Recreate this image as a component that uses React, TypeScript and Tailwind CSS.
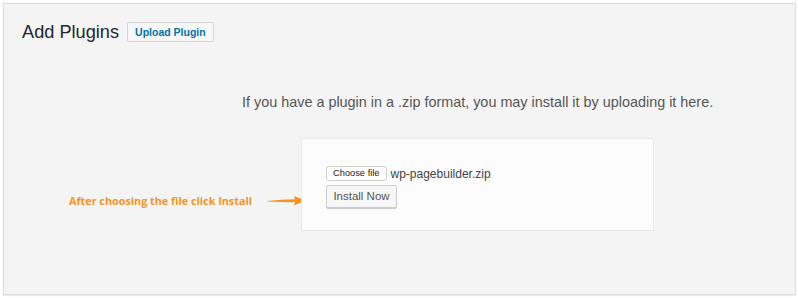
import React from "react";

export default function App() {
  return (
    <div className="w-[798px] h-[298px] bg-white p-[3px] pb-[3px]" style={{ fontFamily: '"Liberation Sans", Arial, sans-serif' }}>
      <div className="h-[292px] w-[793px] bg-[#f4f4f4] border border-[#dcdcdc] shadow-[0_1px_1px_rgba(0,0,0,0.08)] flex flex-col">
        <div className="flex items-center pl-[18px] pt-[18px] gap-[8px]">
          <h1 className="text-[18.2px] text-[#23282d] leading-none">Add Plugins</h1>
          <button className="h-[20px] px-[7px] border border-[#d5d5d5] bg-[#f7f7f7] rounded-[2px] text-[10.5px] font-bold text-[#0073aa] leading-none">
            Upload Plugin
          </button>
        </div>
        <p className="mt-[53px] pl-[238px] text-[14.4px] text-[#555] leading-none">
          If you have a plugin in a .zip format, you may install it by uploading it here.
        </p>
        <div className="flex items-center mt-[29px]">
          <div className="w-[297px] flex items-center justify-end pr-0 pt-[32px]">
            <span className="text-[10.8px] font-bold text-[#f7941d] mr-[15px]" style={{ fontFamily: '"Open Sans", sans-serif' }}>
              After choosing the file click Install
            </span>
            <svg width="40" height="12" viewBox="0 0 40 12" className="mr-[-6px]">
              <path d="M0 6 Q14 4.5 28 4.3 L27 1 L39 5.6 L27 10.5 L28 7.2 Q14 7.2 0 6.6 Z" fill="#f7941d" />
            </svg>
          </div>
          <div className="w-[353px] h-[93px] bg-[#fcfcfc] border border-[#e8e8e8] pl-[24px] pt-[27px] flex flex-col">
            <div className="flex items-center gap-[4px]">
              <button className="h-[15px] px-[6px] bg-white border border-[#cfcfcf] rounded-[3px] text-[9.3px] text-[#222] leading-none">
                Choose file
              </button>
              <span className="text-[12px] text-[#444] leading-none">wp-pagebuilder.zip</span>
            </div>
            <button className="mt-[4px] w-[71px] h-[23px] bg-[#f7f7f7] border border-[#cccccc] rounded-[2px] shadow-[0_1px_0_#ccc] text-[11.5px] text-[#555] leading-none">
              Install Now
            </button>
          </div>
        </div>
      </div>
    </div>
  );
}
